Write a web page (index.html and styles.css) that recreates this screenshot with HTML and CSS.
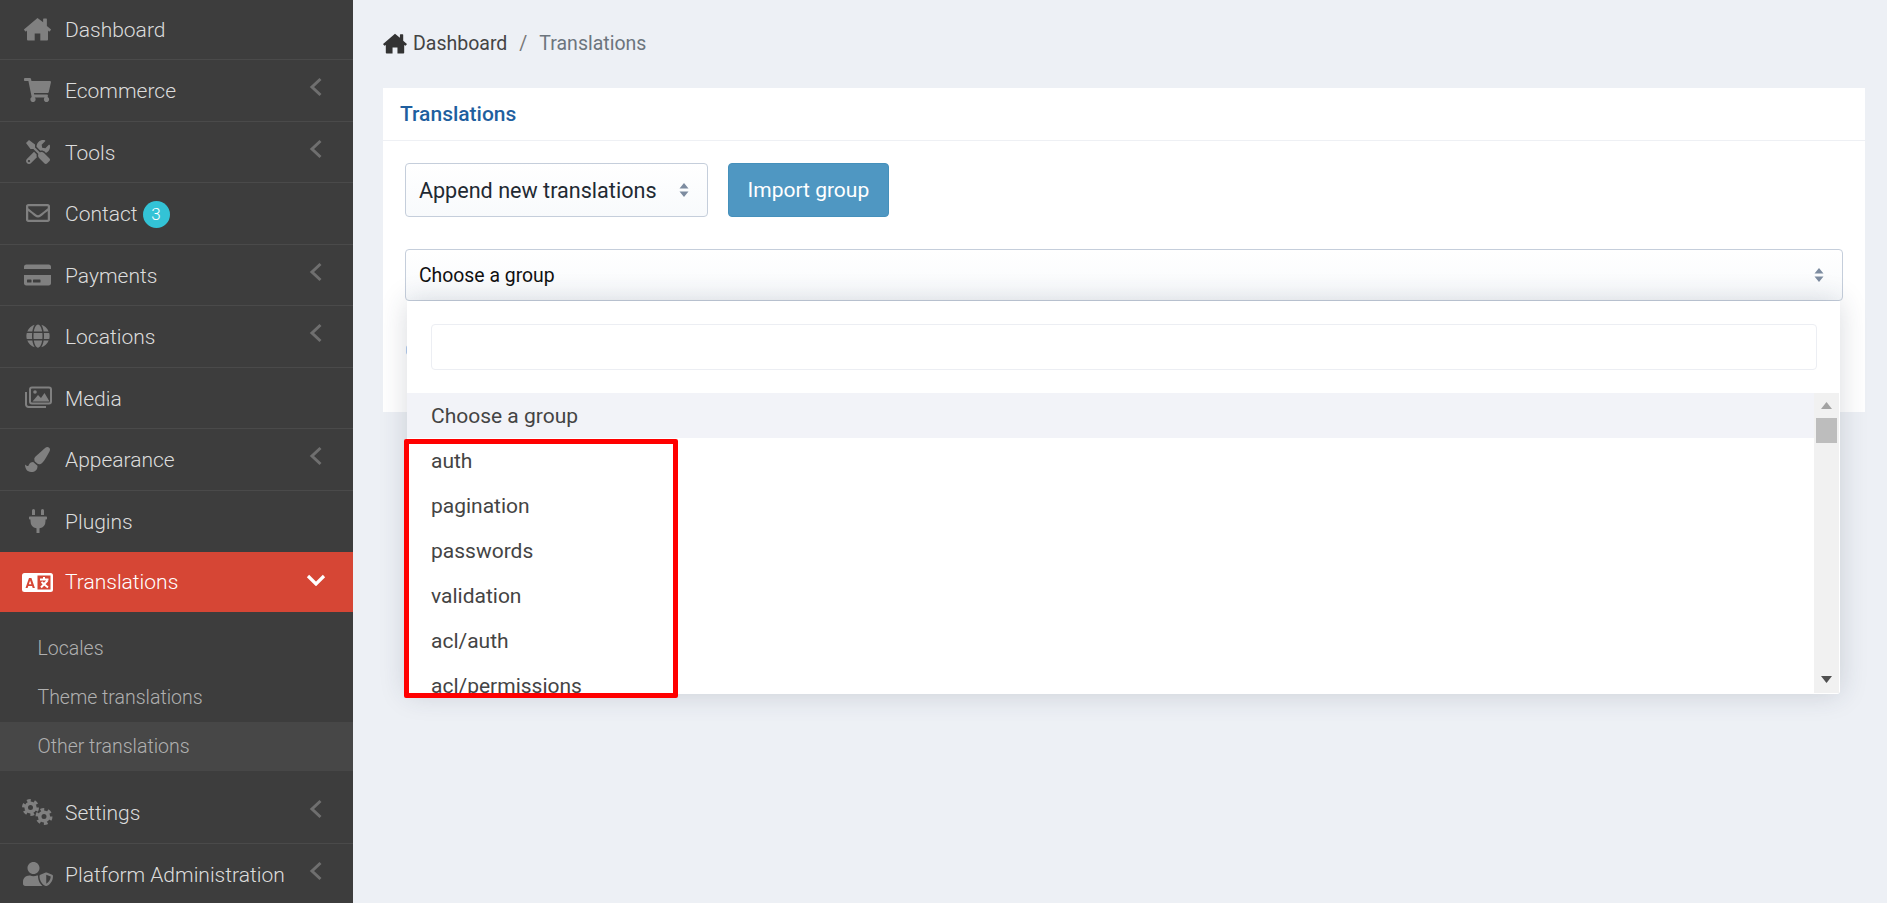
FILE: index.html
```html
<!DOCTYPE html>
<html lang="en">
<head>
<meta charset="utf-8">
<title>Translations</title>
<link rel="stylesheet" href="styles.css">
</head>
<body>
<aside class="sidebar">
  <ul class="nav">
    <li class="nav-row"><span class="nav-icon"><svg class="ic" width="27" height="24" viewBox="0 0 576 512"><path d="M288 20 4 262a12 12 0 0 0-1 17l24 27a12 12 0 0 0 17 1l20-17v190a20 20 0 0 0 20 20h144V352h120v148h144a20 20 0 0 0 20-20V290l20 17a12 12 0 0 0 17-1l24-27a12 12 0 0 0-1-17l-84-72V44a12 12 0 0 0-12-12h-56a12 12 0 0 0-12 12v70z"/></svg></span><span class="nav-label">Dashboard</span></li>
    <li class="nav-row"><span class="nav-icon"><svg class="ic" width="27" height="24" viewBox="0 0 576 512"><path d="M528.12 301.319l47.273-208C578.806 78.301 567.391 64 551.99 64H159.208l-9.166-44.81C147.758 8.021 137.93 0 126.529 0H24C10.745 0 0 10.745 0 24v16c0 13.255 10.745 24 24 24h69.883l70.248 343.435C147.325 417.1 136 435.222 136 456c0 30.928 25.072 56 56 56s56-25.072 56-56c0-15.674-6.447-29.835-16.824-40h209.647C430.447 426.165 424 440.326 424 456c0 30.928 25.072 56 56 56s56-25.072 56-56c0-22.172-12.888-41.332-31.579-50.405l5.517-24.276c3.413-15.018-8.002-29.319-23.403-29.319H218.117l-6.545-32h293.145c11.206 0 20.92-7.754 23.403-18.681z"/></svg></span><span class="nav-label">Ecommerce</span><svg class="chev" width="14" height="20" viewBox="0 0 14 20"><path d="M11.5 2 3 10l8.500 8"/></svg></li>
    <li class="nav-row"><span class="nav-icon"><svg class="ic" width="24" height="24" viewBox="0 0 512 512"><path d="M501.1 395.7L384 278.6c-23.1-23.1-57.6-27.6-85.4-13.9L192 158.1V96L64 0 0 64l96 128h62.1l106.6 106.6c-13.6 27.8-9.2 62.3 13.9 85.4l117.1 117.1c14.6 14.6 38.2 14.6 52.7 0l52.7-52.7c14.5-14.6 14.5-38.2 0-52.7zM331.7 225c28.3 0 54.9 11 74.9 31l19.4 19.4c15.8-6.9 30.8-16.5 43.8-29.5 37.1-37.1 49.7-89.3 37.9-136.7-2.2-9-13.5-12.1-20.1-5.5l-74.4 74.4-67.9-11.3L334 98.900l74.4-74.4c6.6-6.6 3.4-17.9-5.7-20.2-47.4-11.7-99.6.9-136.6 37.9-28.5 28.5-41.9 66.1-41.2 103.6l82.1 82.1c8.1-1.9 16.5-2.9 24.7-2.9zm-103.9 82l-56.7-56.7L18.7 402.8c-25 25-25 65.5 0 90.5s65.5 25 90.500 0l123.6-123.6c-7.6-19.9-9.9-41.6-5-62.7zM64 472c-13.2 0-24-10.8-24-24 0-13.300 10.7-24 24-24s24 10.7 24 24c0 13.2-10.7 24-24 24z"/></svg></span><span class="nav-label">Tools</span><svg class="chev" width="14" height="20" viewBox="0 0 14 20"><path d="M11.5 2 3 10l8.500 8"/></svg></li>
    <li class="nav-row"><span class="nav-icon"><svg class="ic" width="24" height="24" viewBox="0 0 512 512"><path d="M464 64H48C21.49 64 0 85.49 0 112v288c0 26.51 21.49 48 48 48h416c26.51 0 48-21.49 48-48V112c0-26.51-21.49-48-48-48zm0 48v40.805c-22.422 18.259-58.168 46.651-134.587 106.49-16.841 13.247-50.201 45.072-73.413 44.701-23.208.375-56.579-31.459-73.413-44.701C106.18 199.465 70.425 171.067 48 152.805V112h416zM48 400V214.398c22.914 18.251 55.409 43.862 104.938 82.646 21.857 17.205 60.134 55.186 103.062 54.955 42.717.231 80.509-37.199 103.053-54.947 49.528-38.783 82.032-64.401 104.947-82.653V400H48z"/></svg></span><span class="nav-label">Contact</span><span class="badge">3</span></li>
    <li class="nav-row"><span class="nav-icon"><svg class="ic" width="27" height="24" viewBox="0 0 576 512"><path d="M0 432c0 26.500 21.500 48 48 48h480c26.500 0 48-21.500 48-48V256H0v176zm192-68c0-6.600 5.400-12 12-12h136c6.600 0 12 5.400 12 12v40c0 6.600-5.400 12-12 12H204c-6.600 0-12-5.400-12-12v-40zm-128 0c0-6.600 5.400-12 12-12h72c6.600 0 12 5.400 12 12v40c0 6.600-5.400 12-12 12H76c-6.600 0-12-5.400-12-12v-40zM576 80v48H0V80c0-26.500 21.500-48 48-48h480c26.500 0 48 21.500 48 48z"/></svg></span><span class="nav-label">Payments</span><svg class="chev" width="14" height="20" viewBox="0 0 14 20"><path d="M11.5 2 3 10l8.500 8"/></svg></li>
    <li class="nav-row"><span class="nav-icon"><svg class="ic" width="24" height="24" viewBox="0 0 496 512"><path d="M336.500 160C322 70.700 287.800 8 248 8s-74 62.700-88.500 152h177zM152 256c0 22.200 1.200 43.500 3.300 64h185.300c2.100-20.500 3.300-41.800 3.300-64s-1.200-43.500-3.300-64H155.300c-2.100 20.500-3.300 41.800-3.300 64zm324.700-96c-28.600-67.900-86.500-120.400-158-141.600 24.400 33.800 41.200 84.700 50 141.600h108zM177.200 18.400C105.800 39.600 47.800 92.100 19.300 160h108c8.700-56.900 25.500-107.800 49.900-141.600zM487.400 192H372.700c2.100 21 3.300 42.500 3.300 64s-1.200 43-3.300 64h114.600c5.500-20.500 8.600-41.800 8.600-64s-3.100-43.500-8.500-64zM120 256c0-21.500 1.200-43 3.300-64H8.600C3.200 212.500 0 233.800 0 256s3.200 43.500 8.600 64h114.600c-2-21-3.200-42.500-3.200-64zm39.500 96c14.500 89.300 48.700 152 88.500 152s74-62.700 88.500-152h-177zm159.300 141.600c71.400-21.200 129.400-73.700 158-141.600h-108c-8.800 56.900-25.600 107.800-50 141.600zM19.300 352c28.600 67.900 86.500 120.400 158 141.600-24.400-33.800-41.200-84.700-50-141.600h-108z"/></svg></span><span class="nav-label">Locations</span><svg class="chev" width="14" height="20" viewBox="0 0 14 20"><path d="M11.5 2 3 10l8.500 8"/></svg></li>
    <li class="nav-row"><span class="nav-icon"><svg class="ic" width="28" height="23" viewBox="0 0 28 23"><path class="ic-line" d="M2 6v12.500a2.500 2.500 0 0 0 2.500 2.500H22"/><rect class="ic-line" x="6" y="1.500" width="21" height="16" rx="2"/><path d="M8.500 15.500 14 9l3 3 3.500-5 5 8.500z"/><circle cx="11" cy="6" r="1.800"/></svg></span><span class="nav-label">Media</span></li>
    <li class="nav-row"><span class="nav-icon"><svg class="ic" width="25" height="25" viewBox="0 0 512 512"><path d="M167.020 309.340c-40.120 2.580-76.530 17.860-97.190 72.300-2.350 6.210-8 9.980-14.590 9.980-11.110 0-45.460-27.670-55.250-34.350C0 439.620 37.930 512 128 512c75.860 0 128-43.770 128-120.190 0-3.110-.65-6.080-.97-9.130l-88.010-73.340zM457.890 0c-15.160 0-29.370 6.710-40.210 16.450C213.270 199.050 192 203.340 192 257.090c0 13.700 3.250 26.760 8.730 38.700l63.820 53.180c7.210 1.800 14.640 3.030 22.390 3.030 62.110 0 98.110-45.470 211.160-256.460 7.380-14.350 13.900-29.850 13.900-45.990C512 20.640 486 0 457.890 0z"/></svg></span><span class="nav-label">Appearance</span><svg class="chev" width="14" height="20" viewBox="0 0 14 20"><path d="M11.5 2 3 10l8.500 8"/></svg></li>
    <li class="nav-row nav-row-last"><span class="nav-icon"><svg class="ic" width="18" height="24" viewBox="0 0 384 512"><path d="M320 32a32 32 0 0 0-64 0v96h64Zm48 128H16A16 16 0 0 0 0 176v32a16 16 0 0 0 16 16H32v32A160.070 160.070 0 0 0 160 412.800V512h64V412.800A160.070 160.070 0 0 0 352 256V224h16a16 16 0 0 0 16-16V176A16 16 0 0 0 368 160ZM128 32a32 32 0 0 0-64 0v96h64Z"/></svg></span><span class="nav-label">Plugins</span></li>
    <li class="nav-row nav-row-active"><span class="nav-icon"><svg width="31" height="19" viewBox="0 0 31 19"><rect width="31" height="19" rx="2.500" fill="#fff"/><path fill="#d64635" fill-rule="evenodd" d="M3.500 15 7 5h2.400l3.500 10h-2.200l-.6-2H6.300l-.7 2zM6.900 11.300h2.500L8.100 7.500z"/><rect x="15.500" y="2.500" width="13" height="14" fill="#d64635"/><path stroke="#fff" stroke-width="2" fill="none" d="M18 6.500h8.500M22 4v2.500M19 14.500l6.500-7M19.500 9l6.500 5.500"/></svg></span><span class="nav-label nav-label-active">Translations</span><svg class="chev-down" width="20" height="12" viewBox="0 0 20 12"><path d="M2 2l8 8 8-8"/></svg></li>
    <li class="sub">
      <ul class="sub-list">
        <li class="sub-row">Locales</li>
        <li class="sub-row">Theme translations</li>
        <li class="sub-row sub-row-active">Other translations</li>
      </ul>
    </li>
    <li class="nav-row"><span class="nav-icon"><svg class="gear" width="31" height="26" viewBox="0 0 31 26"><circle cx="8.500" cy="8.500" r="4.300" class="gear-ring"/><circle cx="8.500" cy="8.500" r="7" class="gear-teeth"/><circle cx="22" cy="17.500" r="4.300" class="gear-ring"/><circle cx="22" cy="17.500" r="7" class="gear-teeth"/></svg></span><span class="nav-label">Settings</span><svg class="chev" width="14" height="20" viewBox="0 0 14 20"><path d="M11.500 2 3 10l8.500 8"/></svg></li>
    <li class="nav-row"><span class="nav-icon"><svg class="ic" width="30" height="24" viewBox="0 0 640 512"><path d="M622.300 271.100l-115.200-45c-4.100-1.600-12.600-3.700-22.200 0l-115.200 45c-10.700 4.200-17.700 14-17.700 24.900 0 111.600 68.700 188.800 132.900 213.900 9.600 3.700 18 1.600 22.200 0C558.400 489.900 640 420.500 640 296c0-10.900-7-20.700-17.700-24.900zM496 462.400V273.300l95.500 37.300c-5.600 87.100-60.900 135.400-95.500 151.800zM224 256c70.700 0 128-57.300 128-128S294.700 0 224 0 96 57.300 96 128s57.300 128 128 128zm96 40c0-2.500.8-4.800 1.100-7.200-2.500-.1-4.900-.8-7.500-.8h-16.700c-22.200 10.200-46.900 16-72.900 16s-50.600-5.800-72.900-16h-16.700C60.200 288 0 348.200 0 422.400V464c0 26.500 21.500 48 48 48h352c6.200 0 12.100-1.300 17.500-3.400C369.800 471.200 320 399.100 320 296z"/></svg></span><span class="nav-label">Platform Administration</span><svg class="chev" width="14" height="20" viewBox="0 0 14 20"><path d="M11.500 2 3 10l8.500 8"/></svg></li>
  </ul>
</aside>

<main class="main">
  <nav class="crumbs">
    <svg class="crumb-home" width="24" height="21" viewBox="0 0 576 512"><path d="M288 20 4 262a12 12 0 0 0-1 17l24 27a12 12 0 0 0 17 1l20-17v190a20 20 0 0 0 20 20h144V352h120v148h144a20 20 0 0 0 20-20V290l20 17a12 12 0 0 0 17-1l24-27a12 12 0 0 0-1-17l-84-72V44a12 12 0 0 0-12-12h-56a12 12 0 0 0-12 12v70z"/></svg>
    <span class="crumb-link">Dashboard</span>
    <span class="crumb-sep">/</span>
    <span class="crumb-current">Translations</span>
  </nav>

  <section class="card">
    <header class="card-head">Translations</header>
    <div class="card-body">
      <div class="import-row">
        <div class="select select-mode">
          <span>Append new translations</span>
          <svg class="updown" width="10" height="14" viewBox="0 0 10 14"><path d="M5 0l4.500 5.500h-9zM5 14 .5 8.500h9z"/></svg>
        </div>
        <button class="btn-import" type="button">Import group</button>
      </div>
      <div class="combo">
        <div class="select select-group">
          <span>Choose a group</span>
          <svg class="updown" width="10" height="14" viewBox="0 0 10 14"><path d="M5 0l4.500 5.500h-9zM5 14 .5 8.500h9z"/></svg>
        </div>
        <div class="hidden-btn"></div>
        <div class="dropdown">
          <div class="search-wrap"><div class="search"></div></div>
          <div class="listbox">
            <ul class="options">
              <li class="option option-active">Choose a group</li>
              <li class="option">auth</li>
              <li class="option">pagination</li>
              <li class="option">passwords</li>
              <li class="option">validation</li>
              <li class="option">acl/auth</li>
              <li class="option">acl/permissions</li>
            </ul>
            <div class="scrollbar">
              <svg class="sb-up" width="11" height="7" viewBox="0 0 11 7"><path d="M5.500 0 11 7H0z"/></svg>
              <div class="sb-thumb"></div>
              <svg class="sb-down" width="11" height="7" viewBox="0 0 11 7"><path d="M0 0h11L5.500 7z"/></svg>
            </div>
          </div>
        </div>
      </div>
    </div>
  </section>
</main>
<div class="highlight"></div>
</body>
</html>
```
FILE: styles.css
```css
* { box-sizing: border-box; }
html, body { margin: 0; height: 100%; }
body {
  display: flex;
  height: 903px;
  overflow: hidden;
  background: #edf0f5;
  font-family: Roboto, "Liberation Sans", sans-serif;
  position: relative;
}
ul { list-style: none; margin: 0; padding: 0; }

.sidebar { width: 353px; flex: none; background: #3d3d3d; overflow: hidden; }
.nav { margin-top: -1.5px; }
.nav-row {
  display: flex;
  align-items: center;
  height: 61.5px;
  padding: 0 22px;
  border-bottom: 1px solid #4a4a4a;
  color: #dcdcdc;
  font-size: 21px;
  font-weight: 300;
}
.nav-row-last { border-bottom: 0; }
.nav-row-active { background: #d64635; color: #fff; height: 60px; border-bottom: 0; }
.nav-icon { width: 31px; height: 26px; margin-right: 12px; display: flex; align-items: center; justify-content: center; flex: none; }
.ic { fill: #808080; display: block; }
.ic-line { fill: none; stroke: #808080; stroke-width: 2; }
.nav-label { white-space: nowrap; padding-top: 2px; }
.nav-label-active { padding-top: 0; }
.chev { margin-left: auto; margin-right: 8px; margin-top: -6px; fill: none; stroke: #6f6f6f; stroke-width: 3; flex: none; }
.chev-down { margin-left: auto; margin-right: 5px; margin-top: -4px; fill: none; stroke: #fff; stroke-width: 3.200; flex: none; }
.badge {
  width: 27px; height: 27px; border-radius: 50%;
  background: #33c3d6; color: #fff;
  font-size: 17px; font-weight: 300;
  display: flex; align-items: center; justify-content: center;
  margin-left: 5px; margin-top: 2px;
}
.gear-ring { fill: none; stroke: #808080; stroke-width: 3.600; }
.gear-teeth { fill: none; stroke: #808080; stroke-width: 3; stroke-dasharray: 3.700 3.630; }
.sub-list { padding: 12.5px 0 11.5px; }
.sub-row {
  height: 48.700px;
  padding-left: 37.500px;
  display: flex;
  align-items: center;
  color: #b0b0b0;
  font-size: 19.500px;
  font-weight: 300;
}
.sub-row-active { background: #474747; }

.main { flex: 1; min-width: 0; padding: 0 22px 0 30px; }
.crumbs { height: 88px; padding-bottom: 2px; display: flex; align-items: center; font-size: 19.500px; }
.crumb-home { fill: #333; margin-right: 6px; }
.crumb-link { color: #444; }
.crumb-sep { color: #777; margin: 0 12px; }
.crumb-current { color: #6c757d; }

.card { background: #fff; height: 324px; }
.card-head {
  height: 53px;
  padding: 0 0 1px 17px;
  border-bottom: 1px solid #eef0f4;
  display: flex;
  align-items: center;
  color: #1f5f9f;
  font-size: 21px;
  font-weight: 500;
}
.card-body { padding: 22px 22.300px 0 22.400px; }
.import-row { display: flex; gap: 19.500px; margin-bottom: 32px; }
.select {
  display: flex;
  align-items: center;
  justify-content: space-between;
  border: 1px solid #c5cedb;
  border-radius: 4px;
  background: linear-gradient(#fff, #f8fafc);
  color: #1f2a33;
}
.select-mode { width: 303px; height: 54px; padding: 0 18px 0 12.500px; font-size: 21.600px; }
.select-group { height: 52px; padding: 0 18px 0 12.500px; font-size: 19.400px; color: #111; }
.updown { fill: #7d8ca0; }
.btn-import {
  width: 161px; height: 54px;
  border: 1px solid #4590bb;
  border-radius: 4px;
  background: #4f97c2;
  color: #fff;
  font: 400 21px Roboto, "Liberation Sans", sans-serif;
  padding: 0;
}
.combo { position: relative; }
.hidden-btn { width: 40px; height: 10px; margin: 44px 0 0 .5px; background: #b4cdee; border-radius: 3px; }
.dropdown {
  position: absolute;
  left: 2.100px;
  right: 2.700px;
  top: 52px;
  height: 393px;
  background: #fff;
  box-shadow: 0 0 28px rgba(40, 50, 70, .18);
  border-radius: 0 0 3px 3px;
}
.search-wrap { height: 92px; padding: 23px 23px 0 23.500px; }
.search { height: 46px; border: 1px solid #eceef3; border-radius: 4px; }
.listbox { display: flex; height: 300px; overflow: hidden; }
.options { flex: 1; min-width: 0; }
.option {
  height: 45px;
  padding-left: 23.500px;
  display: flex;
  align-items: center;
  color: #444;
  font-size: 21px;
}
.option-active { background: #f2f3f8; }
.scrollbar {
  width: 25px; flex: none; margin-right: 1px;
  background: #f1f1f1;
  display: flex; flex-direction: column; align-items: center;
}
.sb-up { fill: #a3a3a3; margin-top: 9px; }
.sb-thumb { width: 21px; height: 25px; background: #bdbdbd; margin-top: 9px; }
.sb-down { fill: #505050; margin-top: auto; margin-bottom: 10px; }
.highlight {
  position: absolute;
  left: 404px;
  top: 439px;
  width: 274px;
  height: 259px;
  border: 5px solid #f00;
  border-radius: 2px;
}
```
